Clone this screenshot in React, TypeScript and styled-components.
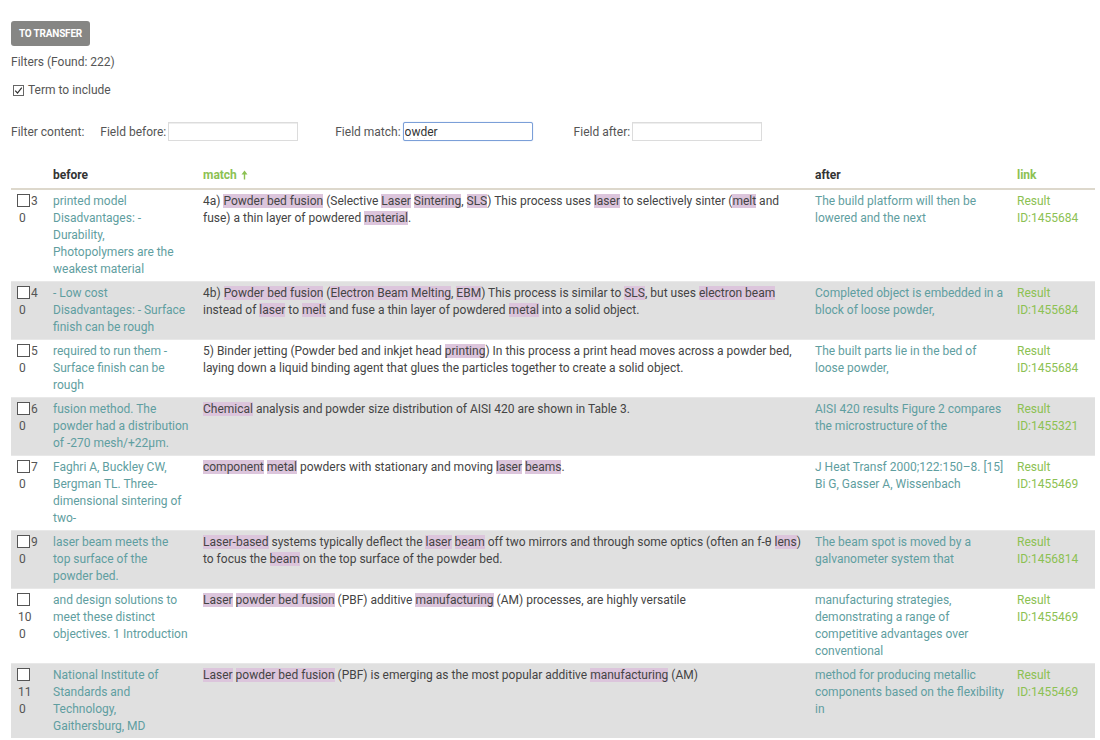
import React from "react";
import styled, { createGlobalStyle } from "styled-components";

const Global = createGlobalStyle`
  html, body { margin: 0; padding: 0; background: #fff; }
  body { font-family: Roboto, "Liberation Sans", Arial, sans-serif; font-size: 12px; color: #444; }
`;

const Page = styled.div`
  padding: 21px 5px 0 11px;
  overflow: hidden;
  height: 740px;
  box-sizing: border-box;
`;

const TransferButton = styled.button`
  display: block;
  height: 25px;
  padding: 0 8px;
  border: none;
  border-radius: 3px;
  background: #868684;
  color: #fff;
  font-family: Roboto, "Liberation Sans", Arial, sans-serif;
  font-size: 10px;
  font-weight: 700;
  letter-spacing: -0.2px;
`;

const FoundLine = styled.div`
  margin-top: 8px;
  line-height: 17px;
  color: #555;
`;

const IncludeLine = styled.label`
  display: flex;
  align-items: center;
  gap: 4px;
  margin-top: 11px;
  margin-left: 2px;
  line-height: 17px;
  color: #555;
`;

const TickBox = styled.span`
  width: 11px;
  height: 11px;
  border: 1px solid #666;
  box-sizing: border-box;
  display: inline-flex;
  align-items: center;
  justify-content: center;
  background: #fff;
`;

const FilterRow = styled.div`
  display: flex;
  align-items: center;
  margin-top: 23px;
  color: #555;
`;

const FilterLabel = styled.span<{ $ml: number }>`
  margin-left: ${(p) => p.$ml}px;
  margin-right: 2px;
  white-space: nowrap;
`;

const FilterInput = styled.input<{ $focus?: boolean }>`
  width: 130px;
  height: 19px;
  box-sizing: border-box;
  border: 1px solid ${(p) => (p.$focus ? "#7b9fd8" : "#dcdcdc")};
  border-radius: ${(p) => (p.$focus ? "2px" : "0")};
  box-shadow: ${(p) => (p.$focus ? "0 0 1px #9cb8e6" : "inset 0 1px 0 #eee")};
  padding: 0 1px;
  font-family: Roboto, "Liberation Sans", Arial, sans-serif;
  font-size: 12px;
  color: #333;
  outline: none;
  text-decoration: ${(p) => (p.$focus ? "underline wavy #e03a3a" : "none")};
  text-decoration-thickness: 1px;
  text-underline-offset: 2px;
`;

const Table = styled.table`
  margin-top: 24px;
  width: 1084px;
  border-collapse: collapse;
  table-layout: fixed;
`;

const HeadCell = styled.th<{ $w: number; $pr?: number; $green?: boolean }>`
  width: ${(p) => p.$w}px;
  text-align: left;
  font-weight: 700;
  padding: 2px ${(p) => p.$pr ?? 6}px 4px 6px;
  line-height: 17px;
  color: ${(p) => (p.$green ? "#8cc152" : "#333")};
  border-bottom: 2px solid #ddd8cc;
  white-space: nowrap;
`;

const Row = styled.tr<{ $alt: boolean }>`
  background: ${(p) => (p.$alt ? "#e0e0e0" : "#fff")};
  border-top: 1px solid #e8e8e8;
`;

const Cell = styled.td<{ $tone: "num" | "teal" | "text" | "link"; $pr?: number; $ws?: number }>`
  vertical-align: top;
  padding: 3px ${(p) => p.$pr ?? 6}px 3px 6px;
  line-height: 17px;
  word-wrap: break-word;
  word-spacing: ${(p) => p.$ws ?? 0}px;
  color: ${(p) =>
    p.$tone === "teal"
      ? "#5f9ea0"
      : p.$tone === "link"
      ? "#8cc152"
      : p.$tone === "num"
      ? "#555"
      : "#444"};
`;

const RowBox = styled.span`
  display: inline-block;
  width: 13px;
  height: 13px;
  border: 1px solid #555;
  box-sizing: border-box;
  background: #fff;
  vertical-align: -2px;
`;

const ZeroLine = styled.span`
  display: block;
  padding-left: 2px;
`;

const IdText = styled.span`
  padding-left: 1px;
`;

const Mark = styled.mark`
  background: #dcc5dc;
  color: inherit;
`;

const Arrow = styled.svg`
  margin-left: 4px;
  vertical-align: -1px;
`;

type Item = {
  id: number;
  before: string;
  match: string;
  after: string;
  link: string;
};

const rows: Item[] = [
  {
    id: 3,
    before: "printed model Disadvantages: - Durability, Photopolymers are the weakest material",
    match:
      "4a) [Powder bed fusion] (Selective [Laser] [Sintering], [SLS]) This process uses [laser] to selectively sinter ([melt] and fuse) a thin layer of powdered [material].",
    after: "The build platform will then be lowered and the next",
    link: "1455684",
  },
  {
    id: 4,
    before: "- Low cost Disadvantages: - Surface finish can be rough",
    match:
      "4b) [Powder bed fusion] ([Electron Beam Melting], [EBM]) This process is similar to [SLS], but uses [electron beam] instead of [laser] to [melt] and fuse a thin layer of powdered [metal] into a solid object.",
    after: "Completed object is embedded in a block of loose powder,",
    link: "1455684",
  },
  {
    id: 5,
    before: "required to run them - Surface finish can be rough",
    match:
      "5) Binder jetting (Powder bed and inkjet head [printing]) In this process a print head moves across a powder bed, laying down a liquid binding agent that glues the particles together to create a solid object.",
    after: "The built parts lie in the bed of loose powder,",
    link: "1455684",
  },
  {
    id: 6,
    before: "fusion method. The powder had a distribution of -270 mesh/+22μm.",
    match: "[Chemical] analysis and powder size distribution of AISI 420 are shown in Table 3.",
    after: "AISI 420 results Figure 2 compares the microstructure of the",
    link: "1455321",
  },
  {
    id: 7,
    before: "Faghri A, Buckley CW, Bergman TL. Three-dimensional sintering of two-",
    match: "[component] [metal] powders with stationary and moving [laser] [beams].",
    after: "J Heat Transf 2000;122:150–8. [15] Bi G, Gasser A, Wissenbach",
    link: "1455469",
  },
  {
    id: 9,
    before: "laser beam meets the top surface of the powder bed.",
    match:
      "[Laser-based] systems typically deflect the [laser] [beam] off two mirrors and through some optics (often an f-θ [lens]) to focus the [beam] on the top surface of the powder bed.",
    after: "The beam spot is moved by a galvanometer system that",
    link: "1456814",
  },
  {
    id: 10,
    before: "and design solutions to meet these distinct objectives. 1 Introduction",
    match:
      "[Laser] [powder bed fusion] (PBF) additive [manufacturing] (AM) processes, are highly versatile",
    after: "manufacturing strategies, demonstrating a range of competitive advantages over conventional",
    link: "1455469",
  },
  {
    id: 11,
    before: "National Institute of Standards and Technology, Gaithersburg, MD",
    match:
      "[Laser] [powder bed fusion] (PBF) is emerging as the most popular additive [manufacturing] (AM)",
    after: "method for producing metallic components based on the flexibility in",
    link: "1455469",
  },
];

function Highlighted({ text }: { text: string }) {
  const parts = text.split(/(\[[^\]]+\])/g).filter((s) => s.length > 0);
  return (
    <>
      {parts.map((p, i) =>
        p.startsWith("[") && p.endsWith("]") ? (
          <Mark key={i}>{p.slice(1, -1)}</Mark>
        ) : (
          <React.Fragment key={i}>{p}</React.Fragment>
        )
      )}
    </>
  );
}

const BEFORE_W = 135.54;

export default function App() {
  return (
    <Page>
      <Global />
      <TransferButton>TO TRANSFER</TransferButton>
      <FoundLine>Filters (Found: 222)</FoundLine>
      <IncludeLine>
        <TickBox>
          <svg width="9" height="9" viewBox="0 0 9 9">
            <path d="M1.2 4.6 L3.5 7 L7.8 1.6" fill="none" stroke="#333" strokeWidth="1.2" />
          </svg>
        </TickBox>
        Term to include
      </IncludeLine>
      <FilterRow>
        <FilterLabel $ml={0}>Filter content:</FilterLabel>
        <FilterLabel $ml={14}>Field before:</FilterLabel>
        <FilterInput defaultValue="" />
        <FilterLabel $ml={37}>Field match:</FilterLabel>
        <FilterInput $focus defaultValue="owder" spellCheck={false} />
        <FilterLabel $ml={41}>Field after:</FilterLabel>
        <FilterInput defaultValue="" />
      </FilterRow>
      <Table>
        <thead>
          <tr>
            <HeadCell $w={24}></HeadCell>
            <HeadCell $w={BEFORE_W} $pr={144 - BEFORE_W}>
              before
            </HeadCell>
            <HeadCell $w={600} $green>
              match
              <Arrow width="7" height="10" viewBox="0 0 7 10">
                <path d="M3.5 0.5 L6.5 4.5 L4.2 4.5 L4.2 9.5 L2.8 9.5 L2.8 4.5 L0.5 4.5 Z" fill="#8cc152" />
              </Arrow>
            </HeadCell>
            <HeadCell $w={190}>after</HeadCell>
            <HeadCell $w={72} $green>
              link
            </HeadCell>
          </tr>
        </thead>
        <tbody>
          {rows.map((r, i) => (
            <Row key={r.id} $alt={i % 2 === 1}>
              <Cell $tone="num">
                <RowBox />
                <IdText>{r.id}</IdText>
                <ZeroLine>0</ZeroLine>
              </Cell>
              <Cell $tone="teal" $pr={144 - BEFORE_W} $ws={-0.05}>
                {r.before}
              </Cell>
              <Cell $tone="text">
                <Highlighted text={r.match} />
              </Cell>
              <Cell $tone="teal">{r.after}</Cell>
              <Cell $tone="link">Result ID:{r.link}</Cell>
            </Row>
          ))}
        </tbody>
      </Table>
    </Page>
  );
}
